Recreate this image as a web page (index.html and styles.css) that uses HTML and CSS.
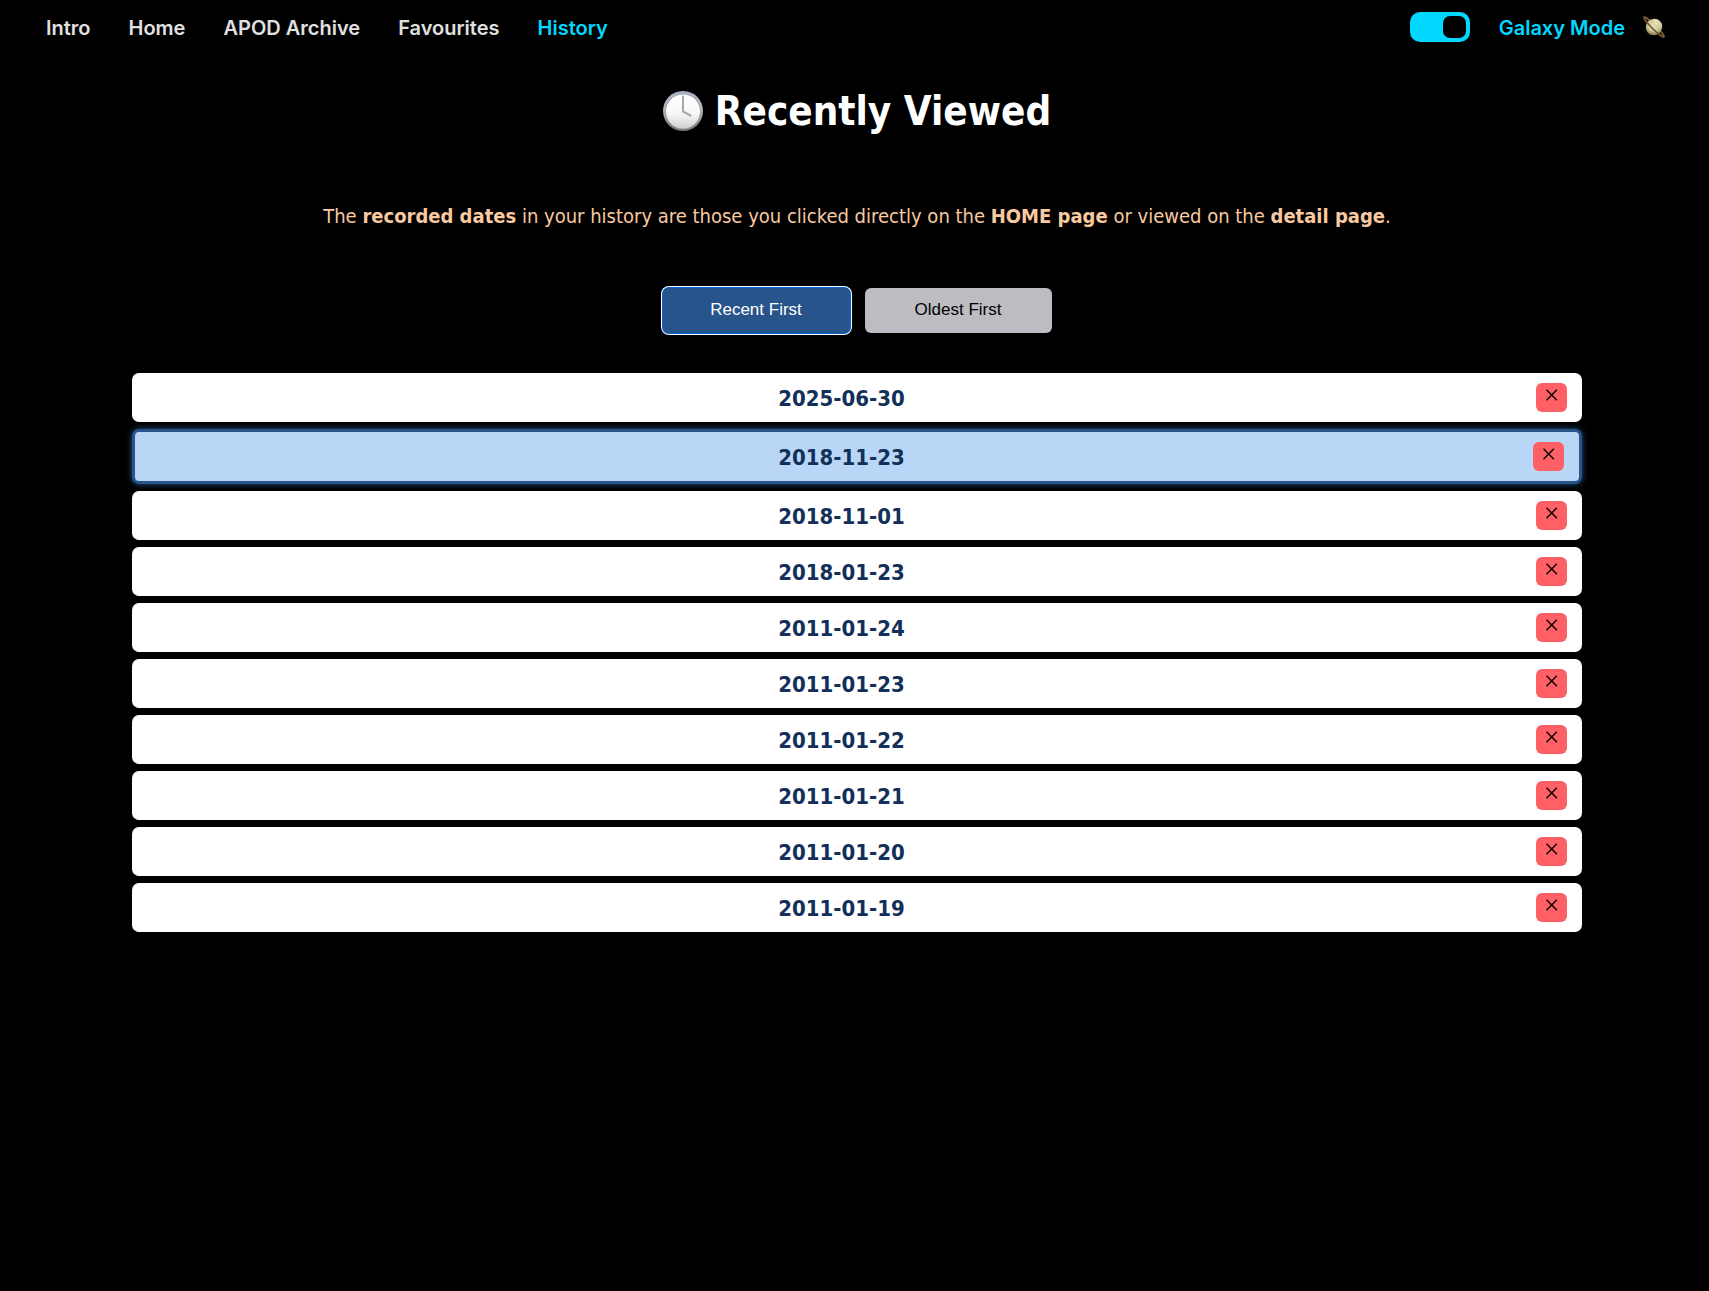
FILE: index.html
```html
<!DOCTYPE html>
<html lang="en">
<head>
<meta charset="utf-8">
<title>Recently Viewed</title>
<link rel="stylesheet" href="styles.css">
</head>
<body>
<svg class="defs" aria-hidden="true">
  <symbol id="cross" viewBox="0 0 12 12"><path d="M.5 .8 10.900 11.2M10.900 .8.5 11.2" fill="none" stroke="#000" stroke-width="1.4"/></symbol>
</svg>
<header class="topbar">
  <nav class="nav">
    <a href="#">Intro</a>
    <a href="#">Home</a>
    <a href="#">APOD Archive</a>
    <a href="#">Favourites</a>
    <a href="#" class="active" aria-current="page">History</a>
  </nav>
  <div class="mode">
    <input type="checkbox" class="toggle" id="galaxy" checked>
    <label for="galaxy">Galaxy Mode</label>
    <svg class="planet" viewBox="0 0 24 24" aria-hidden="true">
      <defs>
        <radialGradient id="globe" cx=".4" cy=".35" r=".7"><stop offset="0" stop-color="#f3ecc4"/><stop offset=".6" stop-color="#cfc99a"/><stop offset="1" stop-color="#77703f"/></radialGradient>
      </defs>
      <g transform="rotate(45 12 12)">
        <ellipse cx="12" cy="12" rx="14" ry="2" fill="none" stroke="#86693d" stroke-width="1.600"/>
        <ellipse cx="12" cy="12" rx="8" ry="8.500" fill="url(#globe)"/>
        <path d="M5.500 8.500Q12 10 18.500 8.500M4.800 10.300Q12 11.800 19.200 10.300" fill="none" stroke="#a89b66" stroke-width=".6" opacity=".6"/>
        <path d="M-2 12C-2 13.200 5 14 12 14S26 13.200 26 12" fill="none" stroke="#6b5028" stroke-width="1.400"/>
      </g>
    </svg>
  </div>
</header>
<main class="page">
  <h1 class="title">
    <svg class="clock" viewBox="0 0 40 40" aria-hidden="true">
      <defs>
        <linearGradient id="rim" x2="0" y2="1"><stop offset="0" stop-color="#a9b4c6"/><stop offset=".5" stop-color="#b4b4b6"/><stop offset="1" stop-color="#707070"/></linearGradient>
        <linearGradient id="face" x2="0" y2="1"><stop offset="0" stop-color="#fff"/><stop offset=".55" stop-color="#f8f8f8"/><stop offset="1" stop-color="#cfcfcf"/></linearGradient>
      </defs>
      <circle cx="20" cy="20" r="20" fill="url(#rim)"/>
      <circle cx="20" cy="20.500" r="17.500" fill="url(#face)" stroke="#8f949c" stroke-width=".8"/>
      <path d="M20 5.500V20.500L27.500 24.500" fill="none" stroke="#a9a9ab" stroke-width="2" stroke-linecap="round" stroke-linejoin="round"/>
    </svg>
    Recently Viewed
  </h1>
  <p class="note">The <strong>recorded dates</strong> in your history are those you clicked directly on the <strong>HOME page</strong> or viewed on the <strong>detail page</strong>.</p>
  <div class="sort">
    <button type="button" class="sort-btn selected">Recent First</button>
    <button type="button" class="sort-btn">Oldest First</button>
  </div>
  <ul class="history">
    <li class="entry"><a href="#">2025-06-30</a><button type="button" class="remove" aria-label="Remove 2025-06-30"><svg><use href="#cross"/></svg></button></li>
    <li class="entry current"><a href="#">2018-11-23</a><button type="button" class="remove" aria-label="Remove 2018-11-23"><svg><use href="#cross"/></svg></button></li>
    <li class="entry"><a href="#">2018-11-01</a><button type="button" class="remove" aria-label="Remove 2018-11-01"><svg><use href="#cross"/></svg></button></li>
    <li class="entry"><a href="#">2018-01-23</a><button type="button" class="remove" aria-label="Remove 2018-01-23"><svg><use href="#cross"/></svg></button></li>
    <li class="entry"><a href="#">2011-01-24</a><button type="button" class="remove" aria-label="Remove 2011-01-24"><svg><use href="#cross"/></svg></button></li>
    <li class="entry"><a href="#">2011-01-23</a><button type="button" class="remove" aria-label="Remove 2011-01-23"><svg><use href="#cross"/></svg></button></li>
    <li class="entry"><a href="#">2011-01-22</a><button type="button" class="remove" aria-label="Remove 2011-01-22"><svg><use href="#cross"/></svg></button></li>
    <li class="entry"><a href="#">2011-01-21</a><button type="button" class="remove" aria-label="Remove 2011-01-21"><svg><use href="#cross"/></svg></button></li>
    <li class="entry"><a href="#">2011-01-20</a><button type="button" class="remove" aria-label="Remove 2011-01-20"><svg><use href="#cross"/></svg></button></li>
    <li class="entry"><a href="#">2011-01-19</a><button type="button" class="remove" aria-label="Remove 2011-01-19"><svg><use href="#cross"/></svg></button></li>
  </ul>
</main>
</body>
</html>
```
FILE: styles.css
```css
* { box-sizing: border-box; }

body {
  margin: 0;
  min-height: 100vh;
  background: #000;
  color: #fff;
  font-family: Tahoma, "DejaVu Sans Condensed", "DejaVu Sans", sans-serif;
}

a { color: inherit; text-decoration: none; }

.defs { display: none; }

.topbar {
  display: flex;
  align-items: center;
  justify-content: space-between;
  height: 56px;
  padding: 0 43px 2px 46px;
  font: 600 20px/24px Inter, "Liberation Sans", sans-serif;
  color: #e0e0e0;
}

.nav { display: flex; flex-wrap: wrap; gap: 38px; padding-top: 2px; }
.nav .active, .mode { color: #00d8ff; }

.mode { display: flex; align-items: center; }
.mode label { margin: 0 17px 0 29px; padding-top: 2px; }

.toggle {
  appearance: none;
  display: flex;
  justify-content: flex-end;
  width: 60px;
  height: 30px;
  margin: 0;
  padding: 4px;
  border-radius: 10px;
  background: #00d8ff;
}
.toggle::before {
  content: "";
  width: 23px;
  height: 22px;
  border-radius: 7px;
  background: #000;
}
.toggle:not(:checked) { justify-content: flex-start; }

.planet { width: 24px; height: 24px; }

.page { padding: 31px 127px 40px 132px; text-align: center; }

.title {
  display: flex;
  align-items: center;
  justify-content: center;
  gap: 12px;
  margin: 0 0 64px;
  font-size: 40px;
  line-height: 48px;
}
.clock { width: 40px; height: 40px; }

.note {
  margin: 0 0 55px;
  color: #f9c9a0;
  font-size: 20px;
  line-height: 34px;
}

.sort { display: flex; justify-content: center; gap: 15px; margin-bottom: 40px; }
.sort-btn {
  width: 187px;
  height: 45px;
  padding: 0 0 2px;
  border: 0;
  border-radius: 6px;
  background: #bdbcc2;
  color: #000;
  font: 17px "Liberation Sans", Arial, sans-serif;
}
.sort-btn.selected {
  background: #27548a;
  color: #fff;
  box-shadow: 0 0 0 1px #0560d0, 0 0 0 2px #fff;
}

.history {
  display: flex;
  flex-direction: column;
  gap: 7px;
  margin: 0;
  padding: 0;
  list-style: none;
}
.entry {
  display: flex;
  align-items: center;
  padding: 9px 15px;
  border-radius: 7px;
  background: #fff;
  color: #12305a;
  font-size: 22px;
  font-weight: 700;
  line-height: 29px;
}
.entry a { flex: 1; padding-top: 2px; }
.entry.current {
  border: 3px solid #27548a;
  background: #b9d6f6;
  box-shadow: 0 0 6px #27548a;
}

.remove {
  display: flex;
  justify-content: center;
  width: 31px;
  height: 29px;
  padding: 6px 0 0;
  border: 0;
  border-radius: 6px;
  background: #ff6065;
}
.remove svg { width: 12px; height: 12px; }
```
